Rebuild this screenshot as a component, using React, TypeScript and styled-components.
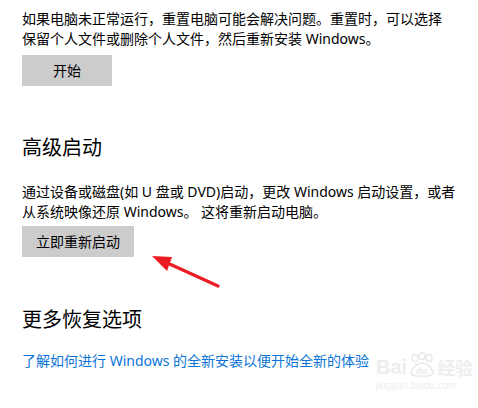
import React from "react";
import styled, { createGlobalStyle } from "styled-components";

const GlobalStyle = createGlobalStyle`
  html, body {
    margin: 0;
    padding: 0;
    background: #ffffff;
  }
  body {
    font-family: "Noto Sans", "Noto Sans CJK SC", sans-serif;
    color: #000000;
  }
`;

const Page = styled.div`
  position: relative;
  width: 478px;
  height: 408px;
  overflow: hidden;
  padding: 9px 0 0 22px;
  box-sizing: border-box;
`;

const Para = styled.p<{ $gap: number }>`
  margin: 0 0 ${(p) => p.$gap}px 0;
  font-size: 14px;
  line-height: 20px;
  white-space: nowrap;
`;

const ActionButton = styled.button<{ $after: number }>`
  display: block;
  height: 31px;
  min-width: 90px;
  padding: 0 14px;
  margin: 0 0 ${(p) => p.$after}px 0;
  border: none;
  background: #cccccc;
  color: #000000;
  font-family: inherit;
  font-size: 14px;
  line-height: 31px;
`;

const Heading = styled.h2<{ $after: number }>`
  margin: 0 0 ${(p) => p.$after}px 0;
  font-size: 20px;
  font-weight: 400;
  line-height: 28px;
`;

const Link = styled.a`
  display: block;
  font-size: 14px;
  line-height: 20px;
  color: #0b74d6;
  text-decoration: none;
`;

const Arrow = styled.svg`
  position: absolute;
  left: 145px;
  top: 248px;
`;

const Watermark = styled.div`
  position: absolute;
  left: 376px;
  top: 352px;
  color: #eeeeee;
  font-family: "Liberation Sans", sans-serif;
  display: flex;
  flex-direction: column;
  align-items: flex-start;
`;

const MarkRow = styled.div`
  display: flex;
  align-items: flex-end;
  font-size: 20px;
  font-weight: 700;
  line-height: 22px;
`;

const MarkSite = styled.div`
  font-size: 10px;
  line-height: 12px;
  margin-top: 2px;
`;

export default function App() {
  return (
    <>
      <GlobalStyle />
      <Page>
        <Para $gap={6}>
          如果电脑未正常运行，重置电脑可能会解决问题。重置时，可以选择
          <br />
          保留个人文件或删除个人文件，然后重新安装 Windows。
        </Para>
        <ActionButton $after={48}>开始</ActionButton>

        <Heading $after={20}>高级启动</Heading>
        <Para $gap={4}>
          通过设备或磁盘(如 U 盘或 DVD)启动，更改 Windows 启动设置，或者
          <br />
          从系统映像还原 Windows。 这将重新启动电脑。
        </Para>
        <ActionButton $after={49}>立即重新启动</ActionButton>

        <Heading $after={17}>更多恢复选项</Heading>
        <Link>了解如何进行 Windows 的全新安装以便开始全新的体验</Link>

        <Arrow width="80" height="45" viewBox="0 0 80 45">
          <line x1="73" y1="38" x2="18" y2="13" stroke="#ec1c24" strokeWidth="3.2" strokeLinecap="round" />
          <polygon points="7,8 27,9 22,23" fill="#ec1c24" />
        </Arrow>

        <Watermark>
          <MarkRow>
            <span>Bai</span>
            <svg width="30" height="26" viewBox="0 0 30 26">
              <g fill="none" stroke="#e8e8e8" strokeWidth="1.4">
                <ellipse cx="8" cy="6" rx="3" ry="3.5" />
                <ellipse cx="15" cy="4" rx="3" ry="3.5" />
                <ellipse cx="22" cy="6" rx="3" ry="3.5" />
                <path d="M4 20 Q8 11 15 11 Q22 11 26 20 Q26 25 15 24 Q4 25 4 20 Z" />
              </g>
              <text x="9" y="22" fontSize="9" fill="#e8e8e8" fontFamily="Liberation Sans">du</text>
            </svg>
            <span style={{ fontFamily: "'Noto Sans CJK SC', sans-serif", fontSize: 18 }}>经验</span>
          </MarkRow>
          <MarkSite>jingyan.baidu.com</MarkSite>
        </Watermark>
      </Page>
    </>
  );
}
